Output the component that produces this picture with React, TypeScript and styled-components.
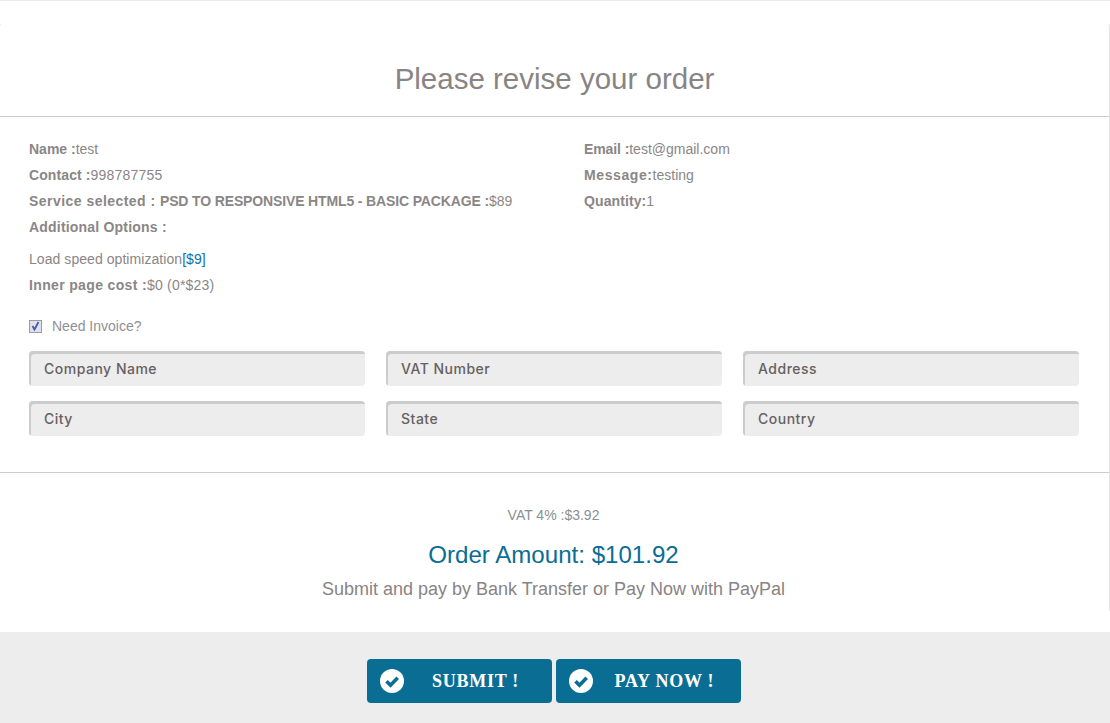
import React from "react";
import styled, { createGlobalStyle } from "styled-components";

const Global = createGlobalStyle`
  html, body { margin: 0; padding: 0; background: #fff; }
  body { font-family: "Liberation Sans", Arial, sans-serif; overflow: hidden; }
  * { box-sizing: border-box; }
`;

const Page = styled.div`
  width: 1110px;
  height: 723px;
  display: flex;
  flex-direction: column;
  border-top: 1px solid #ebebeb;
  overflow: hidden;
`;

const Panel = styled.main`
  height: 589px;
  margin: 21px 0 21px -1px;
  border: 1px solid #e6e6e6;
  border-top-color: #fff;
  border-bottom-color: #fff;
  border-radius: 5px 5px 0 0;
`;

const Header = styled.header`
  height: 94px;
  padding-top: 37px;
  border-bottom: 1px solid #cccccc;
`;

const Title = styled.h1`
  margin: 0;
  font-size: 29.5px;
  line-height: 38px;
  font-weight: 400;
  color: #888484;
  text-align: center;
`;

const Details = styled.section`
  height: 356px;
  padding: 19px 29px 0;
  border-bottom: 1px solid #cccccc;
`;

const Columns = styled.div`
  display: grid;
  grid-template-columns: 555px 1fr;
`;

const Column = styled.div`
  display: flex;
  flex-direction: column;
`;

const Line = styled.div`
  font-size: 14px;
  line-height: 26px;
  color: #8a8686;
`;

const OptionLine = styled(Line)`
  margin-top: 6px;
  letter-spacing: 0.06px;
`;

const Strong = styled.b<{ $track?: number }>`
  font-weight: 700;
  letter-spacing: ${(p) => p.$track ?? 0}px;
`;

const Digits = styled.span`
  letter-spacing: 0.2px;
`;

const Price = styled.span`
  color: #0a6fa8;
`;

const InvoiceRow = styled.label`
  display: flex;
  align-items: center;
  height: 20px;
  margin-top: 18px;
  font-size: 14px;
  color: #8f8f94;
`;

const Check = styled.span`
  width: 13px;
  height: 13px;
  margin-right: 10px;
  border: 1px solid #9a9aa5;
  background: #dfe1ec;
  display: flex;
  align-items: center;
  justify-content: center;
`;

const FieldGrid = styled.div`
  display: grid;
  grid-template-columns: repeat(3, 336px);
  column-gap: 21px;
  row-gap: 15px;
  margin-top: 15px;
`;

const Field = styled.input`
  height: 35px;
  padding: 0 0 0 15px;
  border: 0;
  border-radius: 4px;
  background: #ededed;
  box-shadow: inset 2px 3px 0 #cccccc;
  font-family: "Inter", sans-serif;
  font-size: 14px;
  font-weight: 500;
  letter-spacing: 0.5px;
  outline: none;
  &::placeholder {
    color: #666060;
    opacity: 1;
  }
`;

const Summary = styled.section`
  text-align: center;
  padding: 33px 2px 0 0;
`;

const Vat = styled.div`
  font-size: 14px;
  line-height: 18px;
  color: #8a8f94;
`;

const Amount = styled.div`
  margin-top: 17px;
  font-size: 24.1px;
  line-height: 28px;
  color: #0a6d94;
`;

const Note = styled.div`
  margin-top: 8px;
  font-size: 18px;
  line-height: 24px;
  color: #888484;
`;

const Footer = styled.footer`
  flex: 1;
  background: #ededed;
  display: flex;
  justify-content: center;
  gap: 4px;
  padding: 27px 2px 0 0;
`;

const ActionButton = styled.button`
  width: 185px;
  height: 44px;
  padding: 0 0 0 13px;
  border: 0;
  border-radius: 4px;
  background: #0a6d94;
  color: #fff;
  display: flex;
  align-items: center;
  font-family: "Liberation Serif", serif;
  font-weight: 700;
  font-size: 18px;
  letter-spacing: 0.75px;
`;

const ButtonLabel = styled.span`
  flex: 1;
  text-align: center;
  padding-right: 5px;
`;

const CheckCircle = () => (
  <svg width="24" height="24" viewBox="0 0 24 24">
    <circle cx="12" cy="12" r="12" fill="#fff" />
    <path d="M6.5 12.2l4 4 7.2-7.4" fill="none" stroke="#0a6d94" strokeWidth="3.6" />
  </svg>
);

const fields = ["Company Name", "VAT Number", "Address", "City", "State", "Country"];

export default function App() {
  return (
    <Page>
      <Global />
      <Panel>
        <Header>
          <Title>Please revise your order</Title>
        </Header>
        <Details>
          <Columns>
            <Column>
              <Line><Strong>Name :</Strong>test</Line>
              <Line><Strong $track={0.1}>Contact :</Strong><Digits>998787755</Digits></Line>
              <Line>
                <Strong $track={0.46}>Service selected : </Strong>
                <Strong $track={-0.14}>PSD TO RESPONSIVE HTML5 - BASIC PACKAGE :</Strong>$89
              </Line>
              <Line><Strong $track={0.2}>Additional Options :</Strong></Line>
              <OptionLine>Load speed optimization<Price>[$9]</Price></OptionLine>
              <Line><Strong $track={0.35}>Inner page cost :</Strong><Digits>$0 (0*$23)</Digits></Line>
            </Column>
            <Column>
              <Line><Strong $track={-0.1}>Email :</Strong>test@gmail.com</Line>
              <Line><Strong $track={0.6}>Message:</Strong>testing</Line>
              <Line><Strong $track={0.1}>Quantity:</Strong>1</Line>
            </Column>
          </Columns>
          <InvoiceRow>
            <Check>
              <svg width="9" height="10" viewBox="0 0 9 10">
                <path d="M1.5 5l2 3.5L7.5 1" fill="none" stroke="#4a5aa8" strokeWidth="1.8" />
              </svg>
            </Check>
            Need Invoice?
          </InvoiceRow>
          <FieldGrid>
            {fields.map((f) => <Field key={f} placeholder={f} />)}
          </FieldGrid>
        </Details>
        <Summary>
          <Vat>VAT 4% :$3.92</Vat>
          <Amount>Order Amount: $101.92</Amount>
          <Note>Submit and pay by Bank Transfer or Pay Now with PayPal</Note>
        </Summary>
      </Panel>
      <Footer>
        <ActionButton><CheckCircle /><ButtonLabel>SUBMIT !</ButtonLabel></ActionButton>
        <ActionButton><CheckCircle /><ButtonLabel>PAY NOW !</ButtonLabel></ActionButton>
      </Footer>
    </Page>
  );
}
